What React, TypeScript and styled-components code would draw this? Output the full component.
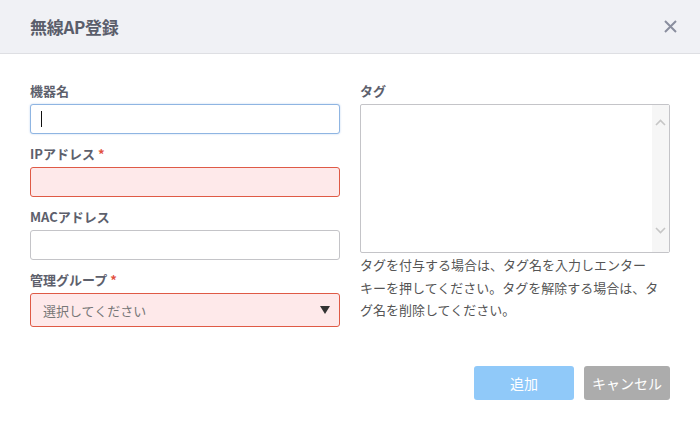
import React from "react";
import styled, { createGlobalStyle } from "styled-components";

const FONT = `"Noto Sans CJK JP", "Noto Sans", sans-serif`;

const GlobalStyle = createGlobalStyle`
  html, body {
    margin: 0;
    padding: 0;
    background: #fff;
    font-family: ${FONT};
  }
  * { box-sizing: border-box; }
`;

const Dialog = styled.div`
  width: 700px;
  height: 426px;
  background: #fff;
  display: flex;
  flex-direction: column;
`;

const Header = styled.header`
  height: 54px;
  flex: 0 0 54px;
  background: #f0f1f5;
  border-bottom: 1px solid #dedfe3;
  display: flex;
  align-items: center;
  justify-content: space-between;
  padding: 0 23px 0 30px;
`;

const Title = styled.h1`
  margin: 0;
  font-size: 17px;
  font-weight: 700;
  color: #5b5e6b;
  letter-spacing: -0.3px;
`;

const Close = styled.button`
  border: 0;
  background: none;
  padding: 0;
  width: 14px;
  height: 14px;
  display: flex;
  align-items: center;
  justify-content: center;
  cursor: pointer;
`;

const Body = styled.div`
  padding: 27px 30px 0;
  display: grid;
  grid-template-columns: 310px 310px;
  column-gap: 20px;
`;

const Column = styled.div`
  display: flex;
  flex-direction: column;
`;

const Field = styled.div`
  display: flex;
  flex-direction: column;
  margin-bottom: 10px;
`;

const Label = styled.label`
  font-size: 13px;
  line-height: 20px;
  font-weight: 700;
  color: #5d606c;
  margin-bottom: 3px;
`;

const Required = styled.span`
  color: #e2523f;
  margin-left: 3px;
`;

const Input = styled.div<{ $state?: "focus" | "error" }>`
  height: 30px;
  border-radius: 3px;
  border: 1px solid
    ${(p) =>
      p.$state === "focus" ? "#8fb5e2" : p.$state === "error" ? "#df5a46" : "#c4c4c8"};
  background: ${(p) => (p.$state === "error" ? "#fee9ea" : "#fff")};
  box-shadow: ${(p) =>
    p.$state === "focus" ? "0 0 2px rgba(100,150,220,0.45)" : "none"};
  display: flex;
  align-items: center;
  padding-left: 10px;
`;

const Caret = styled.span`
  width: 1px;
  height: 16px;
  background: #111;
`;

const Select = styled.div`
  height: 34px;
  border-radius: 3px;
  border: 1px solid #df5a46;
  background: #fee9ea;
  display: flex;
  align-items: center;
  justify-content: space-between;
  padding: 0 9px 0 12px;
  font-size: 13px;
  color: #777;
`;

const Arrow = styled.span`
  width: 0;
  height: 0;
  border-left: 5px solid transparent;
  border-right: 5px solid transparent;
  border-top: 8px solid #333;
`;

const TagBox = styled.div`
  height: 149px;
  border: 1px solid #c4c4c8;
  border-radius: 2px;
  display: flex;
  justify-content: flex-end;
`;

const Track = styled.div`
  width: 17px;
  background: #f6f6f6;
  display: flex;
  flex-direction: column;
  justify-content: space-between;
  align-items: center;
  padding: 14px 0 18px;
`;

const Help = styled.p`
  margin: 1px 0 0;
  font-size: 13px;
  line-height: 22.5px;
  color: #555;
  line-break: strict;
`;

const NoBreak = styled.span`
  white-space: nowrap;
`;

const Footer = styled.div`
  margin-top: auto;
  padding: 0 30px 26px;
  display: flex;
  justify-content: flex-end;
  gap: 10px;
`;

const Button = styled.button<{ $kind: "primary" | "cancel" }>`
  height: 34px;
  width: ${(p) => (p.$kind === "primary" ? "100px" : "86px")};
  border: 0;
  border-radius: 3px;
  background: ${(p) => (p.$kind === "primary" ? "#90c9f9" : "#acacac")};
  color: #fff;
  font-family: ${FONT};
  font-size: 14px;
  font-weight: 400;
  cursor: pointer;
`;

const Chevron = ({ up }: { up?: boolean }) => (
  <svg width="11" height="7" viewBox="0 0 11 7">
    <path
      d={up ? "M1 6 L5.5 1.5 L10 6" : "M1 1 L5.5 5.5 L10 1"}
      fill="none"
      stroke="#c6c6c6"
      strokeWidth="1.6"
    />
  </svg>
);

export default function App() {
  return (
    <>
      <GlobalStyle />
      <Dialog lang="ja">
        <Header>
          <Title>無線AP登録</Title>
          <Close aria-label="close">
            <svg width="13" height="13" viewBox="0 0 13 13">
              <path d="M1 1 L12 12 M12 1 L1 12" stroke="#8a8e9e" strokeWidth="2" />
            </svg>
          </Close>
        </Header>
        <Body>
          <Column>
            <Field>
              <Label>機器名</Label>
              <Input $state="focus">
                <Caret />
              </Input>
            </Field>
            <Field>
              <Label>
                IPアドレス<Required>*</Required>
              </Label>
              <Input $state="error" />
            </Field>
            <Field>
              <Label>MACアドレス</Label>
              <Input />
            </Field>
            <Field>
              <Label>
                管理グループ<Required>*</Required>
              </Label>
              <Select>
                選択してください
                <Arrow />
              </Select>
            </Field>
          </Column>
          <Column>
            <Field>
              <Label>タグ</Label>
              <TagBox>
                <Track>
                  <Chevron up />
                  <Chevron />
                </Track>
              </TagBox>
              <Help>
                タグを付与する場合は、タグ名を入力しエンター<NoBreak>キー</NoBreak>を押してください。タグを解除する場合は、タグ名を削除してください。
              </Help>
            </Field>
          </Column>
        </Body>
        <Footer>
          <Button $kind="primary">追加</Button>
          <Button $kind="cancel">キャンセル</Button>
        </Footer>
      </Dialog>
    </>
  );
}
